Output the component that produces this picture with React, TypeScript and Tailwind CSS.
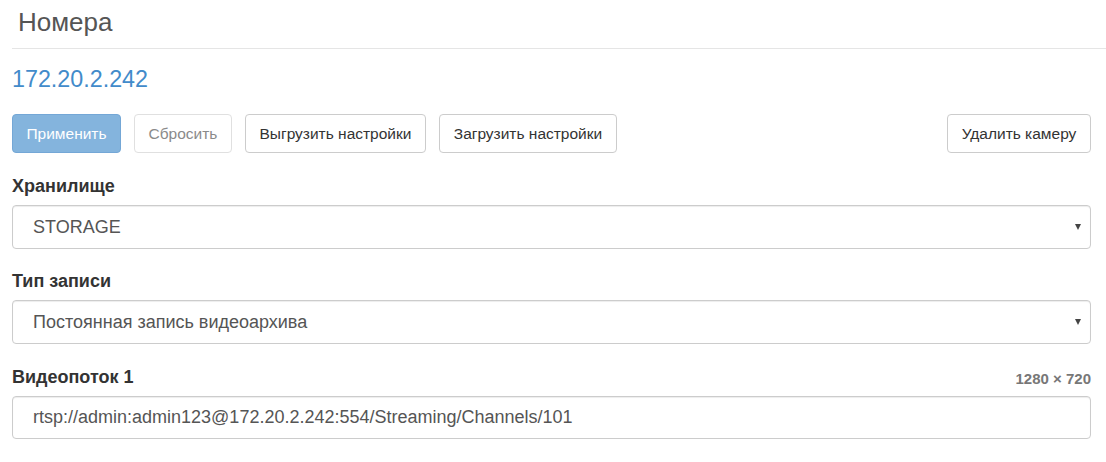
import React from 'react';

const Label: React.FC<{ children: React.ReactNode; extra?: string }> = ({ children, extra }) => (
  <div className="flex items-end justify-between mb-[7px]">
    <span className="text-[18px] font-bold leading-[24px] text-[#333]">{children}</span>
    {extra && <span className="text-[15px] font-bold leading-[20px] text-[#777]">{extra}</span>}
  </div>
);

const SelectBox: React.FC<{ value: string }> = ({ value }) => (
  <div className="relative h-[44px] rounded-[4px] border border-[#ccc] bg-white shadow-[inset_0_1px_1px_rgba(0,0,0,0.075)] flex items-center pl-[20px] pr-8">
    <span className="text-[18px] text-[#555]">{value}</span>
    <span className="absolute right-[9px] top-[18px] w-0 h-0 border-l-[3.5px] border-r-[3.5px] border-t-[6px] border-l-transparent border-r-transparent border-t-[#444]" />
  </div>
);

const btn = 'h-[39px] px-[10px] rounded-[4px] border text-[15.5px] leading-none whitespace-nowrap shrink-0';

export default function App() {
  return (
    <div className="w-[1106px] h-[462px] bg-white overflow-hidden" style={{ fontFamily: '"Liberation Sans", Arial, sans-serif' }}>
      <div className="ml-3 h-[49px] border-b border-[#e5e5e5] flex items-center">
        <h1 className="text-[26px] font-normal text-[#555] pl-[6px] leading-none -mt-[4px]">Номера</h1>
      </div>
      <div className="pl-3 pr-[15px]">
        <div className="mt-[17px] text-[23.3px] leading-[26px] text-[#428bca]">172.20.2.242</div>
        <div className="mt-[22px] flex items-center gap-[13px]">
          <button className={`${btn} w-[109px] bg-[#84b4dd] border-[#74a7d6] text-white`}>Применить</button>
          <button className={`${btn} w-[98px] bg-white border-[#e0e0e0] text-[#8a8a8a]`}>Сбросить</button>
          <button className={`${btn} w-[181px] bg-white border-[#ccc] text-[#333]`}>Выгрузить настройки</button>
          <button className={`${btn} w-[178px] bg-white border-[#ccc] text-[#333]`}>Загрузить настройки</button>
          <button className={`${btn} ml-auto w-[144px] bg-white border-[#ccc] text-[#333]`}>Удалить камеру</button>
        </div>
        <div className="mt-[21px]">
          <Label>Хранилище</Label>
          <SelectBox value="STORAGE" />
        </div>
        <div className="mt-[20px]">
          <Label>Тип записи</Label>
          <SelectBox value="Постоянная запись видеоархива" />
        </div>
        <div className="mt-[21px]">
          <Label extra="1280 × 720">Видеопоток 1</Label>
          <div className="h-[43px] rounded-[4px] border border-[#ccc] bg-white shadow-[inset_0_1px_1px_rgba(0,0,0,0.075)] flex items-center pl-[20px]">
            <span className="text-[18px] text-[#555]">rtsp://admin:admin123@172.20.2.242:554/Streaming/Channels/101</span>
          </div>
        </div>
      </div>
    </div>
  );
}
